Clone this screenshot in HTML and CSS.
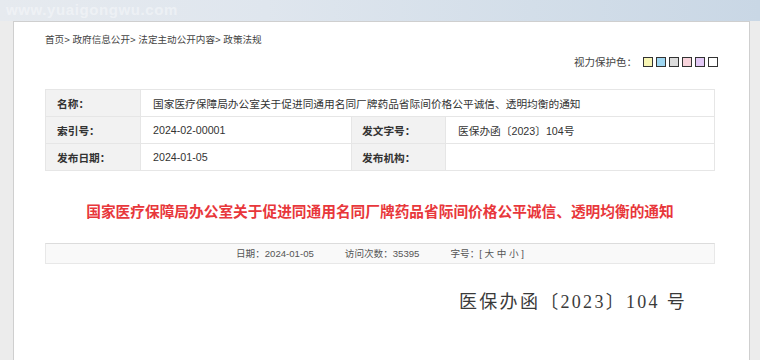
FILE: index.html
```html
<!DOCTYPE html>
<html lang="zh-CN">
<head>
    <meta charset="UTF-8">
    <title>国家医疗保障局办公室关于促进同通用名同厂牌药品省际间价格公平诚信、透明均衡的通知</title>
    <link rel="stylesheet" href="styles.css">
</head>
<body>

    <div class="sky">
        <span class="watermark">www.yuaigongwu.com</span>
    </div>

    <div class="page">
        <div class="panel">
            <div class="crumbs">首页&gt; 政府信息公开&gt; 法定主动公开内容&gt; 政策法规</div>

            <div class="eye-care">
                <span>视力保护色：</span>
                <span class="swatch sw-yellow"></span>
                <span class="swatch sw-blue"></span>
                <span class="swatch sw-gray"></span>
                <span class="swatch sw-pink"></span>
                <span class="swatch sw-purple"></span>
                <span class="swatch sw-white"></span>
            </div>

            <table class="meta">
                <tr>
                    <th>名称：</th>
                    <td colspan="3">国家医疗保障局办公室关于促进同通用名同厂牌药品省际间价格公平诚信、透明均衡的通知</td>
                </tr>
                <tr>
                    <th>索引号：</th>
                    <td class="val-mid">2024-02-00001</td>
                    <th class="th-mid">发文字号：</th>
                    <td>医保办函〔2023〕104号</td>
                </tr>
                <tr>
                    <th>发布日期：</th>
                    <td class="val-mid">2024-01-05</td>
                    <th class="th-mid">发布机构：</th>
                    <td></td>
                </tr>
            </table>

            <h1 class="doc-title">国家医疗保障局办公室关于促进同通用名同厂牌药品省际间价格公平诚信、透明均衡的通知</h1>

            <div class="info-bar">
                <span>日期：2024-01-05</span>
                <span>访问次数：35395</span>
                <span>字号：[ 大 中 小 ]</span>
            </div>

            <div class="doc-number">医保办函〔2023〕104 号</div>
        </div>
    </div>

</body>
</html>
```

FILE: styles.css
```css
* {
    box-sizing: border-box;
    margin: 0;
    padding: 0;
}

body {
    font-family: "Liberation Sans", "Noto Sans CJK SC", sans-serif;
    background-color: #f5f5f5;
    color: #333;
    height: 360px;
    overflow: hidden;
}

/* faixa do topo com o céu */
.sky {
    height: 21px;
    background: linear-gradient(90deg, #e6eaef 0%, #dfe6ee 35%, #d3dee9 70%, #c9d7e5 100%);
    padding-left: 6px;
}

.watermark {
    display: block;
    font-size: 15px;
    font-weight: 700;
    letter-spacing: 0.6px;
    line-height: 20px;
    color: rgba(255, 255, 255, 0.4);
}

.page {
    display: flex;
    background-color: #ececec;
}

.panel {
    margin-left: 13px;
    width: 737px;
    min-height: 340px;
    background-color: #fff;
    border: 1px solid #cfcfcf;
    border-bottom: none;
    padding: 11px 34px 0 31px;
}

.crumbs {
    font-size: 9.6px;
    line-height: 14px;
    color: #444;
}

.eye-care {
    display: flex;
    justify-content: flex-end;
    align-items: center;
    gap: 3px;
    margin-top: 8px;
    margin-right: -3px;
    font-size: 10.5px;
    line-height: 14px;
    color: #444;
}

.eye-care span:first-child {
    margin-right: 3px;
}

.swatch {
    width: 10px;
    height: 10px;
    border: 1px solid #333;
}

.sw-yellow { background-color: #f8f6b4; }
.sw-blue { background-color: #9fd7f2; }
.sw-gray { background-color: #dcdcdc; }
.sw-pink { background-color: #f8d4dc; }
.sw-purple { background-color: #e3c9f6; }
.sw-white { background-color: #fff; }

.meta {
    width: 670px;
    margin-top: 20px;
    border-collapse: collapse;
    font-size: 10.7px;
}

.meta th,
.meta td {
    height: 27px;
    border: 1px solid #e6e6e6;
    text-align: left;
    vertical-align: middle;
    font-weight: 400;
}

.meta th {
    width: 95px;
    padding-left: 11px;
    background-color: #f2f2f2;
    font-weight: 700;
    color: #333;
}

.meta td {
    padding-left: 12px;
    color: #333;
}

.meta .val-mid {
    width: 211px;
}

.meta .th-mid {
    width: 94px;
    padding-left: 10px;
}

.doc-title {
    margin-top: 30px;
    text-align: center;
    font-size: 14.7px;
    line-height: 22px;
    font-weight: 700;
    color: #e8373b;
}

.info-bar {
    display: flex;
    justify-content: center;
    gap: 31px;
    width: 670px;
    height: 21px;
    margin-top: 20px;
    background-color: #f9f9f9;
    border: 1px solid #e8e8e8;
    border-top-color: #dcdcdc;
    font-size: 9.6px;
    line-height: 19px;
    color: #555;
}

.doc-number {
    margin-top: 26px;
    padding-left: 414px;
    font-family: "Liberation Serif", "Noto Sans CJK SC", serif;
    font-size: 18px;
    line-height: 24px;
    letter-spacing: 2.3px;
    color: #3a3a3a;
}
```
